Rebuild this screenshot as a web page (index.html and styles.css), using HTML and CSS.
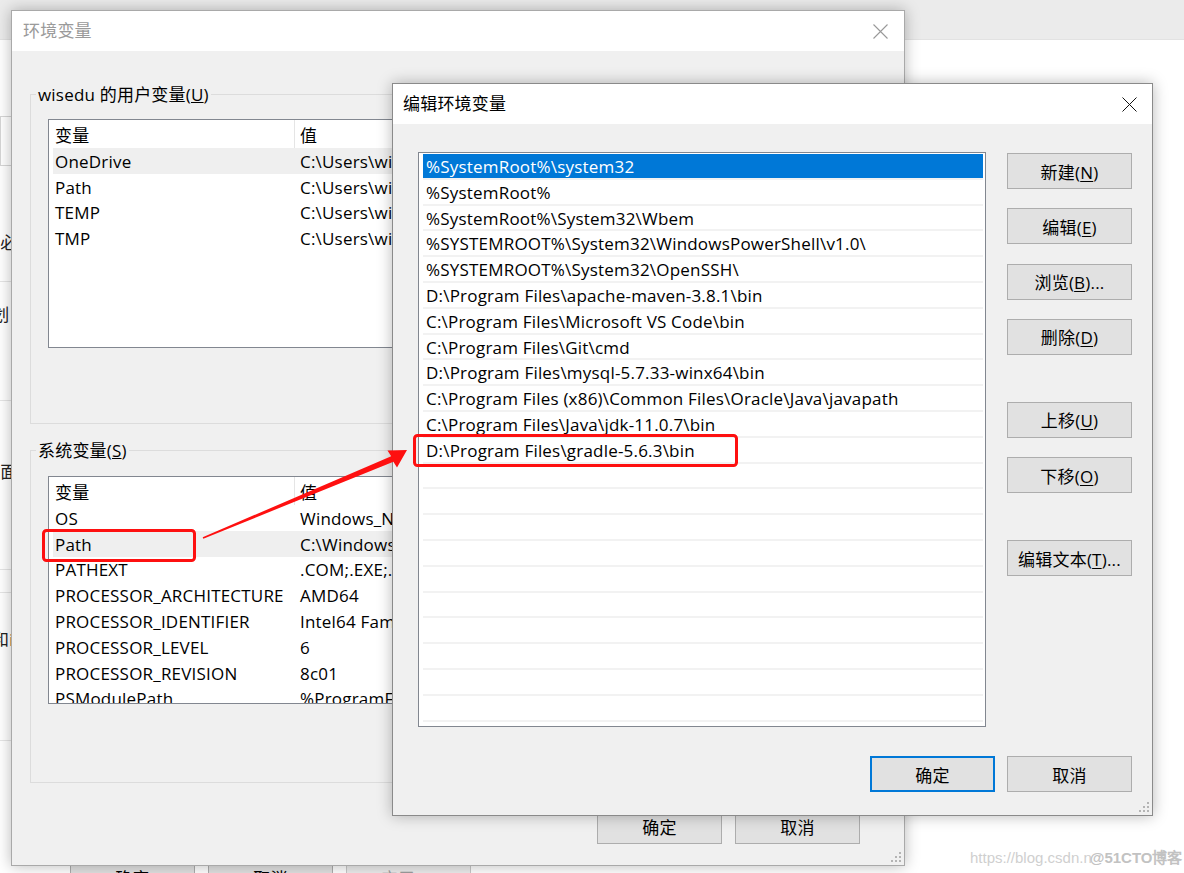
FILE: index.html
```html
<!DOCTYPE html>
<html lang="zh-CN">
<head>
    <meta charset="UTF-8">
    <meta name="viewport" content="width=device-width, initial-scale=1.0">
    <title>编辑环境变量</title>
    <link rel="stylesheet" href="styles.css">
</head>
<body>
<div class="screen">

    <!-- settings window in the back, only its edges show -->
    <div class="backdrop">
        <div class="bd-top"></div>
        <div class="bd-side">
            <div class="bd-box"></div>
            <div class="bd-glyph g1">务必</div>
            <div class="bd-sep s1"></div>
            <div class="bd-glyph g2">规划</div>
            <div class="bd-sep s2"></div>
            <div class="bd-glyph g3">界面i</div>
            <div class="bd-sep s3"></div>
            <div class="bd-sep s3b"></div>
            <div class="bd-glyph g4">和i</div>
            <div class="bd-sep s4"></div>
        </div>
        <div class="bd-buttons">
            <span class="bd-btn">确定</span>
            <span class="bd-btn">取消</span>
            <span class="bd-btn off">应用(A)</span>
        </div>
    </div>

    <!-- 环境变量 -->
    <div class="window env">
        <div class="titlebar">
            <span class="title">环境变量</span>
            <svg class="close" width="15" height="15" viewBox="0 0 15 15"><path d="M0.5 0.5L14.5 14.5M14.5 0.5L0.5 14.5" stroke="#999" stroke-width="1.1" fill="none"/></svg>
        </div>
        <div class="env-body">
            <fieldset class="group user">
                <legend>wisedu 的用户变量(<u>U</u>)</legend>
                <div class="vars user-vars">
                    <div class="vars-head"><span class="c1">变量</span><span class="c2">值</span></div>
                    <div class="vars-row sel"><span class="c1">OneDrive</span><span class="c2">C:\Users\wisedu\OneDrive</span></div>
                    <div class="vars-row"><span class="c1">Path</span><span class="c2">C:\Users\wisedu\AppData\Local\Microsoft\WindowsApps;</span></div>
                    <div class="vars-row"><span class="c1">TEMP</span><span class="c2">C:\Users\wisedu\AppData\Local\Temp</span></div>
                    <div class="vars-row"><span class="c1">TMP</span><span class="c2">C:\Users\wisedu\AppData\Local\Temp</span></div>
                </div>
            </fieldset>

            <fieldset class="group sys">
                <legend>系统变量(<u>S</u>)</legend>
                <div class="vars sys-vars">
                    <div class="vars-head"><span class="c1">变量</span><span class="c2">值</span></div>
                    <div class="vars-row"><span class="c1">OS</span><span class="c2">Windows_NT</span></div>
                    <div class="vars-row sel"><span class="c1">Path</span><span class="c2">C:\Windows\system32;C:\Windows;C:\Windows\System32\Wbem</span></div>
                    <div class="vars-row"><span class="c1">PATHEXT</span><span class="c2">.COM;.EXE;.BAT;.CMD;.VBS;.VBE;.JS;.JSE;.WSF;.WSH;.MSC</span></div>
                    <div class="vars-row"><span class="c1">PROCESSOR_ARCHITECTURE</span><span class="c2">AMD64</span></div>
                    <div class="vars-row"><span class="c1">PROCESSOR_IDENTIFIER</span><span class="c2">Intel64 Family 6 Model 142 Stepping 12, GenuineIntel</span></div>
                    <div class="vars-row"><span class="c1">PROCESSOR_LEVEL</span><span class="c2">6</span></div>
                    <div class="vars-row"><span class="c1">PROCESSOR_REVISION</span><span class="c2">8c01</span></div>
                    <div class="vars-row"><span class="c1">PSModulePath</span><span class="c2">%ProgramFiles%\WindowsPowerShell\Modules</span></div>
                </div>
            </fieldset>

            <div class="env-actions">
                <button class="btn">确定</button>
                <button class="btn">取消</button>
            </div>
        </div>
        <svg class="grip" width="10" height="10" viewBox="0 0 10 10" fill="#b4b4b4">
            <rect x="8" y="0" width="2" height="2"/><rect x="4" y="4" width="2" height="2"/><rect x="8" y="4" width="2" height="2"/>
            <rect x="0" y="8" width="2" height="2"/><rect x="4" y="8" width="2" height="2"/><rect x="8" y="8" width="2" height="2"/>
        </svg>
    </div>

    <!-- 编辑环境变量 -->
    <div class="window edit">
        <div class="titlebar">
            <span class="title">编辑环境变量</span>
            <svg class="close" width="15" height="15" viewBox="0 0 15 15"><path d="M0.5 0.5L14.5 14.5M14.5 0.5L0.5 14.5" stroke="#111" stroke-width="1" fill="none"/></svg>
        </div>
        <div class="edit-body">
            <div class="edit-main">
                <div class="path-list">
                    <div class="path-row sel">%SystemRoot%\system32</div>
                    <div class="path-row">%SystemRoot%</div>
                    <div class="path-row">%SystemRoot%\System32\Wbem</div>
                    <div class="path-row">%SYSTEMROOT%\System32\WindowsPowerShell\v1.0\</div>
                    <div class="path-row">%SYSTEMROOT%\System32\OpenSSH\</div>
                    <div class="path-row">D:\Program Files\apache-maven-3.8.1\bin</div>
                    <div class="path-row">C:\Program Files\Microsoft VS Code\bin</div>
                    <div class="path-row">C:\Program Files\Git\cmd</div>
                    <div class="path-row">D:\Program Files\mysql-5.7.33-winx64\bin</div>
                    <div class="path-row">C:\Program Files (x86)\Common Files\Oracle\Java\javapath</div>
                    <div class="path-row">C:\Program Files\Java\jdk-11.0.7\bin</div>
                    <div class="path-row">D:\Program Files\gradle-5.6.3\bin</div>
                    <div class="path-row"></div>
                    <div class="path-row"></div>
                    <div class="path-row"></div>
                    <div class="path-row"></div>
                    <div class="path-row"></div>
                    <div class="path-row"></div>
                    <div class="path-row"></div>
                    <div class="path-row"></div>
                    <div class="path-row"></div>
                    <div class="path-row"></div>
                    <div class="path-row"></div>
                </div>
                <div class="side-buttons">
                    <button class="btn">新建(<u>N</u>)</button>
                    <button class="btn">编辑(<u>E</u>)</button>
                    <button class="btn">浏览(<u>B</u>)...</button>
                    <button class="btn">删除(<u>D</u>)</button>
                    <button class="btn gap-lg">上移(<u>U</u>)</button>
                    <button class="btn">下移(<u>O</u>)</button>
                    <button class="btn gap-lg">编辑文本(<u>T</u>)...</button>
                </div>
            </div>
            <div class="edit-actions">
                <button class="btn default">确定</button>
                <button class="btn">取消</button>
            </div>
        </div>
        <svg class="grip" width="10" height="10" viewBox="0 0 10 10" fill="#b4b4b4">
            <rect x="8" y="0" width="2" height="2"/><rect x="4" y="4" width="2" height="2"/><rect x="8" y="4" width="2" height="2"/>
            <rect x="0" y="8" width="2" height="2"/><rect x="4" y="8" width="2" height="2"/><rect x="8" y="8" width="2" height="2"/>
        </svg>
    </div>

    <!-- red markup drawn over the screenshot -->
    <svg class="markup" width="1184" height="873" viewBox="0 0 1184 873">
        <rect x="43.5" y="530.5" width="151" height="30" rx="3" fill="none" stroke="#fe1010" stroke-width="3"/>
        <rect x="414.5" y="435.5" width="322" height="30" rx="3" fill="none" stroke="#fe1010" stroke-width="3"/>
        <path d="M202.7 537.3 L391.2 456.2 L387.5 450.5 L407 450 L397 467.5 L393.4 461.8 L203.3 538.7 Z" fill="#fe1010"/>
    </svg>

    <div class="watermark">https://blog.csdn.n<span>@51CTO博客</span></div>
</div>
</body>
</html>
```

FILE: styles.css
```css
* {
    box-sizing: border-box;
}

body {
    margin: 0;
    font-family: "Open Sans", "Noto Sans CJK SC", sans-serif;
    font-size: 17px;
    letter-spacing: 0.2px;
    color: #000;
}

.screen {
    position: relative;
    width: 1184px;
    height: 873px;
    overflow: hidden;
    background: #fff;
}

/* back window */
.backdrop {
    height: 873px;
    display: flex;
    flex-direction: column;
    background: #fff;
}

.bd-top {
    height: 40px;
    flex: none;
    background: #ebebeb;
    border-bottom: 1px solid #e2e2e2;
}

.bd-side {
    width: 300px;
    display: flex;
    flex-direction: column;
}

.bd-box {
    margin-top: 76px;
    height: 50px;
    width: 20px;
    border: 1px solid #d6d6d6;
}

.bd-glyph {
    white-space: nowrap;
    line-height: 24px;
    color: #222;
}

.g1 { margin: 65px 0 0 -17px; }
.g2 { margin: 21px 0 0 -25px; }
.g3 { margin: 59px 0 0 -17px; }
.g4 { margin: 35px 0 0 -8px; }

.bd-sep {
    height: 1px;
    background: #e5e5e5;
}

.s1 { margin-top: 26px; }
.s2 { margin-top: 73px; }
.s3 { margin-top: 85px; }
.s3b { margin-top: 22px; }
.s4 { margin-top: 88px; }

.bd-buttons {
    margin-top: auto;
    height: 14px;
    display: flex;
    gap: 13px;
    padding-left: 70px;
    align-items: flex-start;
}

.bd-btn {
    flex: none;
    width: 125px;
    height: 36px;
    background: #e1e1e1;
    border: 1px solid #adadad;
    display: flex;
    align-items: center;
    justify-content: center;
}

.bd-btn.off {
    color: #9d9d9d;
    background: #ececec;
    border-color: #c8c8c8;
}

/* windows */
.window {
    position: absolute;
    display: flex;
    flex-direction: column;
    background: #f0f0f0;
    border: 1px solid #a9a9a9;
    box-shadow: 0 0 14px rgba(0, 0, 0, 0.28);
}

.env {
    left: 11px;
    top: 10px;
    width: 894px;
    height: 856px;
}

.edit {
    left: 392px;
    top: 83px;
    width: 761px;
    height: 733px;
    border-color: #8a8a8a;
}

.titlebar {
    flex: none;
    height: 40px;
    background: #fff;
    display: flex;
    align-items: center;
    justify-content: space-between;
}

.title {
    padding-bottom: 3px;
}

.env .titlebar {
    padding: 0 16px 0 11px;
}

.env .title {
    color: #9a9a9a;
}

.edit .titlebar {
    padding: 0 15px 0 10px;
}

.close {
    display: block;
}

.grip {
    position: absolute;
    right: 3px;
    bottom: 3px;
}

.btn {
    width: 125px;
    height: 36px;
    padding: 0;
    font: inherit;
    letter-spacing: inherit;
    color: #000;
    background: #e1e1e1;
    border: 1px solid #adadad;
    border-radius: 0;
}

.btn u {
    text-decoration-thickness: 1px;
    text-underline-offset: 2px;
}

/* env dialog body */
.env-body {
    flex: 1;
    display: flex;
    flex-direction: column;
    padding: 0 18px 0 18px;
}

.group {
    margin: 0;
    min-width: 0;
    border: 1px solid #dcdcdc;
    padding: 14px 18px 75px 17px;
}

.group legend {
    margin-left: -12px;
    padding: 0 2px;
    line-height: 21px;
}

.user {
    margin-top: 33px;
}

.sys {
    margin-top: 16px;
    padding-top: 15px;
    padding-bottom: 78px;
}

.vars {
    background: #fff;
    border: 1px solid #828790;
    overflow: hidden;
}

.user-vars {
    height: 229px;
}

.sys-vars {
    height: 228px;
}

.vars-head,
.vars-row {
    display: flex;
    align-items: center;
    white-space: nowrap;
}

.vars-head {
    height: 28px;
}

.vars-head .c1 {
    width: 246px;
    padding-left: 6px;
    border-right: 1px solid #e5e5e5;
    align-self: stretch;
    display: flex;
    align-items: center;
}

.vars-head .c2 {
    padding-left: 5px;
}

.vars-row {
    height: 25.8px;
    margin-left: 4px;
    padding-top: 1px;
}

.vars-row .c1 {
    flex: none;
    width: 243px;
    padding-left: 2px;
}

.vars-row .c2 {
    padding-left: 4px;
}

.vars-row.sel {
    background: #efefef;
}

.env-actions {
    display: flex;
    justify-content: flex-end;
    gap: 13px;
    margin-top: 25px;
    padding-right: 26px;
}

/* edit dialog body */
.edit-body {
    flex: 1;
    display: flex;
    flex-direction: column;
    padding: 28px 20px 0 25px;
}

.edit-main {
    display: flex;
    gap: 21px;
}

.path-list {
    flex: none;
    width: 568px;
    height: 575px;
    background: #fff;
    border: 1px solid #828790;
    padding: 1px 2px 0 4px;
    overflow: hidden;
}

.path-row {
    height: 25.8px;
    line-height: 25.4px;
    padding-left: 3px;
    border-bottom: 2px solid #f2f2f2;
    white-space: nowrap;
}

.path-row.sel {
    background: #0078d7;
    color: #fff;
}

.side-buttons {
    display: flex;
    flex-direction: column;
    padding-top: 1px;
}

.side-buttons .btn + .btn {
    margin-top: 19.3px;
}

.side-buttons .btn.gap-lg {
    margin-top: 47px;
}

.edit-actions {
    display: flex;
    justify-content: flex-end;
    gap: 12px;
    margin-top: 29px;
}

.btn.default {
    border-color: #0078d7;
    box-shadow: inset 0 0 0 1px #0078d7;
}

/* annotations */
.markup {
    position: absolute;
    left: 0;
    top: 0;
    pointer-events: none;
}

.watermark {
    position: absolute;
    left: 970px;
    top: 846px;
    font-family: "Liberation Sans", sans-serif;
    font-size: 15px;
    letter-spacing: 0;
    color: #cfcfcf;
    white-space: nowrap;
}

.watermark span {
    color: #c2c2c2;
    font-weight: bold;
    margin-left: -2px;
}
```
